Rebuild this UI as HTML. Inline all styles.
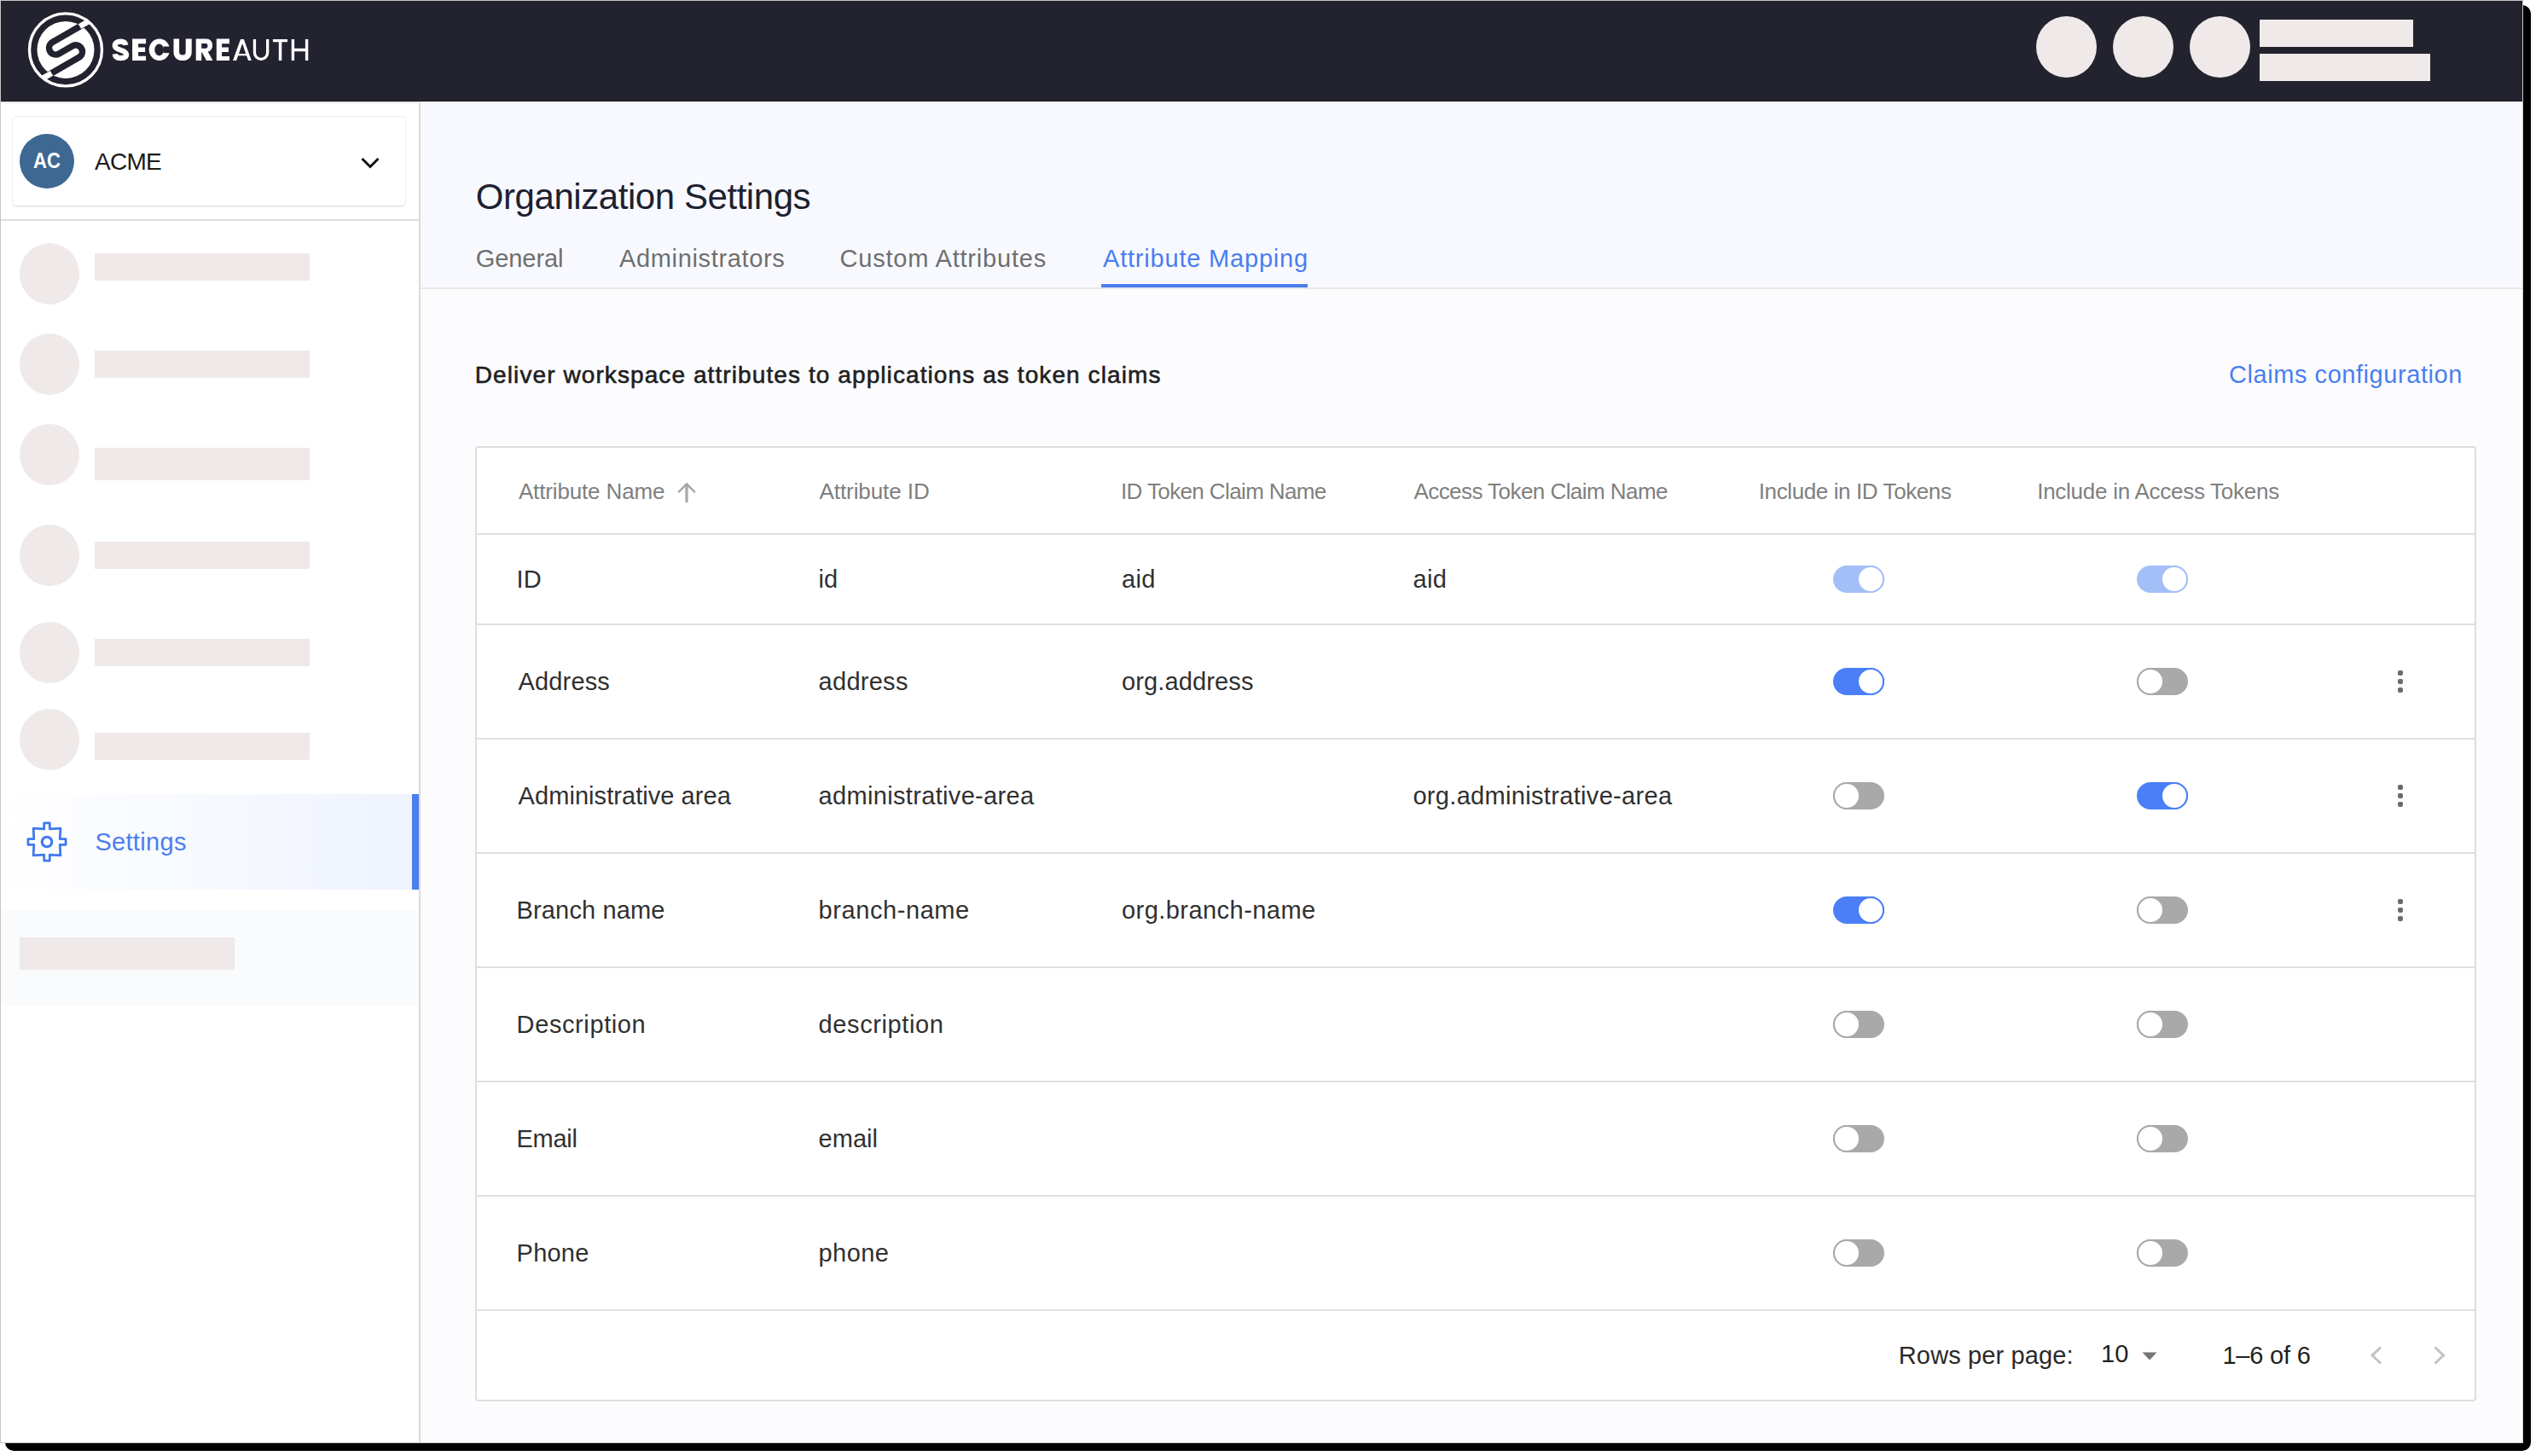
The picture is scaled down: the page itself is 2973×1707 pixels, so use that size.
<!DOCTYPE html>
<html><head><meta charset="utf-8"><style>
html,body{margin:0;padding:0;width:2973px;height:1707px;overflow:hidden;background:#fff;}
body{position:relative;font-family:"Liberation Sans",sans-serif;}
.t{position:absolute;white-space:nowrap;}
#shadow{position:absolute;left:6px;top:6px;width:2961px;height:1695px;background:#000;border-radius:10px;}
#win{position:absolute;left:0;top:0;width:2958px;height:1692px;box-sizing:border-box;border:1px solid #c6c6c6;background:#fcfcfe;overflow:hidden;}
#hdr{position:absolute;left:0;top:0;width:2956px;height:118px;background:#22232f;}
.hc{position:absolute;top:19px;width:71px;height:72px;border-radius:50%;background:#efe9e9;}
.hr{position:absolute;background:#efe9e9;}
#side{position:absolute;left:0;top:118px;width:490px;height:1570px;background:#fff;border-right:2px solid #dadada;border-top:2px solid #e6e6e4;}
.skc{position:absolute;left:23px;width:70px;height:72px;border-radius:50%;background:#efe9e9;}
.skb{position:absolute;left:111px;width:252px;background:#efe9e9;}
.tr{position:absolute;width:60px;height:32px;border-radius:16px;}
.th{position:absolute;width:28px;height:28px;border-radius:50%;background:#fff;border:2px solid;}
.dot{position:absolute;width:6px;height:6px;border-radius:2px;background:#6b6b6b;}
.hl{position:absolute;left:559px;width:2342px;height:2px;background:#dfdfdf;}
</style></head><body>
<div id="shadow"></div>
<div id="win"></div>
<div id="hdr" style="left:1px;top:1px"></div><div style="position:absolute;left:1px;top:118px;width:2956px;height:1px;background:#15151f"></div>
<svg style="position:absolute;left:27px;top:8px" width="100" height="100" viewBox="0 0 100 100">
<defs><clipPath id="disc"><circle cx="50" cy="50.4" r="33.5"/></clipPath></defs>
<circle cx="50" cy="50.4" r="42.5" fill="none" stroke="#fff" stroke-width="3.4"/>
<circle cx="50" cy="50.4" r="33.5" fill="#fff"/>
<g clip-path="url(#disc)"><g transform="translate(50,50.4) rotate(-30)">
  <path d="M 50 -15.5 L -9 -15.5 A 7.75 7.75 0 0 0 -9 0 L 9 0 A 7.75 7.75 0 0 1 9 15.5 L -50 15.5" fill="none" stroke="#22232f" stroke-width="7.5"/>
</g></g>
<g transform="translate(50,50.4) rotate(-30)">
  <line x1="28" y1="-15.5" x2="39.2" y2="-15.5" stroke="#fff" stroke-width="6.5"/>
  <line x1="-28" y1="15.5" x2="-39.2" y2="15.5" stroke="#fff" stroke-width="6.5"/>
</g>
</svg>
<svg style="position:absolute;left:0;top:0" width="400" height="119" viewBox="0 0 400 119">
<g fill="#fff">
<path d="M147.4,52.9 C147,50.3 144.8,48.6 141.3,48.6 C137.4,48.6 134.7,50.6 134.7,53.4 C134.7,56.3 137.4,57.4 141.2,58.6 C145.4,59.9 148.1,61.2 148.1,64.3 C148.1,67.6 145.3,68.1 141.3,68.1 C137.4,68.1 135,66.6 134.8,63.2" fill="none" stroke="#fff" stroke-width="6.2"/>
<path d="M155.1,45.5 H171.1 V51.2 H162.1 V55.5 H170.1 V61.1 H162.1 V65.7 H171.1 V71.1 H155.1 Z"/>
<path fill-rule="evenodd" d="M174.7,58.3 a12.15,12.8 0 1,0 24.3,0 a12.15,12.8 0 1,0 -24.3,0 Z M181.3,58.3 a5.35,6.9 0 1,0 10.7,0 a5.35,6.9 0 1,0 -10.7,0 Z"/>
<rect x="191.5" y="54.5" width="9" height="7.6" fill="#22232f"/>
<path d="M203.5,45.5 L210.1,45.5 L210.1,61 C210.1,63.3 211.6,64.6 214.1,64.6 C216.4,64.6 217.7,63.3 217.7,61 L217.7,45.5 L224.7,45.5 L224.7,61 C224.7,67.3 220.3,71.1 214.1,71.1 C207.9,71.1 203.5,67.3 203.5,61 Z"/>
<path fill-rule="evenodd" d="M229.7,45.5 L241.8,45.5 C246.3,45.5 249.1,48.6 249.1,53.3 C249.1,57 247.2,59.6 243.8,60.8 L249.5,71.1 L242,71.1 L236.9,61.5 L236.2,61.5 L236.2,71.1 L229.7,71.1 Z M236.2,51 L241.3,51 C242.7,51 243.5,52.2 243.5,53.8 C243.5,55.5 242.7,56.7 241.3,56.7 L236.2,56.7 Z"/>
<path d="M253.8,45.5 H269 V51.2 H260.1 V55.6 H268 V61 H260.1 V65.9 H269 V71.1 H253.8 Z"/>
<path fill-rule="evenodd" d="M282,45.9 L285.9,45.9 L294.8,71.1 L291.1,71.1 L289.0,65.2 L279.2,65.2 L277.1,71.1 L273.0,71.1 Z M284.1,51 L288.2,62.9 L280.0,62.9 Z"/>
<path d="M298.45,45.9 L298.45,61.75 A7.6,7.6 0 0 0 313.65,61.75 L313.65,45.9" fill="none" stroke="#fff" stroke-width="3.3"/>
<path d="M319.9,45.9 H337 V49.3 H330.3 V71.1 H326.8 V49.3 H319.9 Z"/>
<path d="M341.7,45.9 H345.1 V56.8 H357.9 V45.9 H361.3 V71.1 H357.9 V60.2 H345.1 V71.1 H341.7 Z"/>
</g></svg>
<div class="hc" style="left:2387px"></div>
<div class="hc" style="left:2477px"></div>
<div class="hc" style="left:2567px"></div>
<div class="hr" style="left:2649px;top:23px;width:180px;height:32px"></div>
<div class="hr" style="left:2649px;top:63px;width:200px;height:32px"></div>
<div id="side" style="left:1px;top:119px"></div>
<div style="position:absolute;left:14px;top:136px;width:460px;height:104px;border:1px solid #eeeeee;border-bottom-color:#e0e0e0;border-radius:5px;background:#fff;box-shadow:0 1px 1px rgba(0,0,0,0.05)"></div>
<div style="position:absolute;left:23px;top:157px;width:64px;height:64px;border-radius:50%;background:#3d6891"></div>
<svg style="position:absolute;left:420px;top:178px" width="28" height="24" viewBox="0 0 28 24">
<path d="M4.5,8 L14,17.5 L23.5,8" fill="none" stroke="#111" stroke-width="3"/>
</svg>
<div style="position:absolute;left:1px;top:257px;width:490px;height:2px;background:#dedede"></div>
<div class=skc style="top:285px"></div><div class=skc style="top:391px"></div><div class=skc style="top:497px"></div><div class=skc style="top:615px"></div><div class=skc style="top:729px"></div><div class=skc style="top:831px"></div><div class=skb style="top:297px;height:32px"></div><div class=skb style="top:411px;height:32px"></div><div class=skb style="top:525px;height:38px"></div><div class=skb style="top:635px;height:32px"></div><div class=skb style="top:749px;height:32px"></div><div class=skb style="top:859px;height:32px"></div>
<div style="position:absolute;left:1px;top:931px;width:482px;height:112px;background:linear-gradient(90deg,#ffffff 0%,#eef3fe 100%)"></div>
<div style="position:absolute;left:483px;top:931px;width:8px;height:112px;background:#4a7ff0"></div>
<svg style="position:absolute;left:31px;top:963px" width="48" height="48" viewBox="-24 -24 48 48">
<path d="M-3.3,-22.1 L3.3,-22.1 L3.3,-15.2 L15.9,-15.9 L15.2,-3.3 L22.1,-3.3 L22.1,3.3 L15.2,3.3 L15.9,15.9 L3.3,15.2 L3.3,22.1 L-3.3,22.1 L-3.3,15.2 L-15.9,15.9 L-15.2,3.3 L-22.1,3.3 L-22.1,-3.3 L-15.2,-3.3 L-15.9,-15.9 L-3.3,-15.2 Z" fill="none" stroke="#4179f0" stroke-width="2.8" stroke-linejoin="round"/>
<circle cx="0" cy="0" r="5.8" fill="none" stroke="#4179f0" stroke-width="3.1"/>
</svg>
<div style="position:absolute;left:1px;top:1067px;width:490px;height:112px;background:#fafbfd"></div>
<div style="position:absolute;left:23px;top:1099px;width:252px;height:38px;background:#efe9e9"></div>
<div style="position:absolute;left:493px;top:119px;width:2464px;height:218px;background:#f8f9fe"></div><div style="position:absolute;left:493px;top:337px;width:2464px;height:2px;background:#e8e8e8"></div>
<div style="position:absolute;left:1291px;top:333px;width:242px;height:4px;background:#4a7ef0"></div>
<div style="position:absolute;left:557px;top:523px;width:2346px;height:1120px;box-sizing:border-box;border:2px solid #dedede;border-radius:4px;background:#fff"></div>
<div class=hl style="top:625px"></div><div class=hl style="top:731px"></div><div class=hl style="top:865px"></div><div class=hl style="top:999px"></div><div class=hl style="top:1133px"></div><div class=hl style="top:1267px"></div><div class=hl style="top:1401px"></div><div class=hl style="top:1535px"></div>
<svg style="position:absolute;left:790px;top:563px" width="30" height="28" viewBox="0 0 30 28">
<path d="M15,26 L15,4.5" stroke="#ababab" stroke-width="3.4" fill="none"/>
<path d="M5.2,14.3 L15,4.5 L24.8,14.3" stroke="#a3a3a3" stroke-width="2.3" fill="none"/>
</svg>
<div class=tr style="left:2149px;top:663.0px;background:#a4bff7"></div><div class=th style="left:2177px;top:663.0px;border-color:#a4bff7"></div><div class=tr style="left:2505px;top:663.0px;background:#a4bff7"></div><div class=th style="left:2533px;top:663.0px;border-color:#a4bff7"></div><div class=tr style="left:2149px;top:783.0px;background:#4a7ff7"></div><div class=th style="left:2177px;top:783.0px;border-color:#4a7ff7"></div><div class=tr style="left:2505px;top:783.0px;background:#a9a9a9"></div><div class=th style="left:2505px;top:783.0px;border-color:#a9a9a9"></div><div class=tr style="left:2149px;top:917.0px;background:#a9a9a9"></div><div class=th style="left:2149px;top:917.0px;border-color:#a9a9a9"></div><div class=tr style="left:2505px;top:917.0px;background:#4a7ff7"></div><div class=th style="left:2533px;top:917.0px;border-color:#4a7ff7"></div><div class=tr style="left:2149px;top:1051.0px;background:#4a7ff7"></div><div class=th style="left:2177px;top:1051.0px;border-color:#4a7ff7"></div><div class=tr style="left:2505px;top:1051.0px;background:#a9a9a9"></div><div class=th style="left:2505px;top:1051.0px;border-color:#a9a9a9"></div><div class=tr style="left:2149px;top:1185.0px;background:#a9a9a9"></div><div class=th style="left:2149px;top:1185.0px;border-color:#a9a9a9"></div><div class=tr style="left:2505px;top:1185.0px;background:#a9a9a9"></div><div class=th style="left:2505px;top:1185.0px;border-color:#a9a9a9"></div><div class=tr style="left:2149px;top:1319.0px;background:#a9a9a9"></div><div class=th style="left:2149px;top:1319.0px;border-color:#a9a9a9"></div><div class=tr style="left:2505px;top:1319.0px;background:#a9a9a9"></div><div class=th style="left:2505px;top:1319.0px;border-color:#a9a9a9"></div><div class=tr style="left:2149px;top:1453.0px;background:#a9a9a9"></div><div class=th style="left:2149px;top:1453.0px;border-color:#a9a9a9"></div><div class=tr style="left:2505px;top:1453.0px;background:#a9a9a9"></div><div class=th style="left:2505px;top:1453.0px;border-color:#a9a9a9"></div>
<div class=dot style="left:2811px;top:786.0px"></div><div class=dot style="left:2811px;top:796.0px"></div><div class=dot style="left:2811px;top:806.0px"></div><div class=dot style="left:2811px;top:920.0px"></div><div class=dot style="left:2811px;top:930.0px"></div><div class=dot style="left:2811px;top:940.0px"></div><div class=dot style="left:2811px;top:1054.0px"></div><div class=dot style="left:2811px;top:1064.0px"></div><div class=dot style="left:2811px;top:1074.0px"></div>
<svg style="position:absolute;left:2510px;top:1584px" width="20" height="12" viewBox="0 0 20 12">
<path d="M1.5,1.5 L18.5,1.5 L10,10.5 Z" fill="#757575"/>
</svg>
<svg style="position:absolute;left:2774px;top:1574px" width="100" height="30" viewBox="0 0 100 30">
<path d="M17,5.5 L7,15 L17,24.5" stroke="#c2c2c2" stroke-width="3" fill="none"/>
<path d="M80.5,5.5 L90.5,15 L80.5,24.5" stroke="#c2c2c2" stroke-width="3" fill="none"/>
</svg>
<div class=t style="left:38.90px;top:175.00px;font-size:26px;line-height:26px;font-weight:700;color:#fff;letter-spacing:0.000px;transform:scaleX(0.8497);transform-origin:0 0;">AC</div><div class=t style="left:111.10px;top:175.70px;font-size:28px;line-height:28px;font-weight:400;color:#1a1a1a;letter-spacing:-0.774px;">ACME</div><div class=t style="left:111.40px;top:972.80px;font-size:29px;line-height:29px;font-weight:400;color:#4a7ef0;letter-spacing:0.316px;">Settings</div><div class=t style="left:557.80px;top:210.00px;font-size:42px;line-height:42px;font-weight:400;color:#1d2130;letter-spacing:-0.438px;">Organization Settings</div><div class=t style="left:557.80px;top:288.80px;font-size:29px;line-height:29px;font-weight:400;color:#6f6f6f;letter-spacing:-0.088px;">General</div><div class=t style="left:726.00px;top:288.80px;font-size:29px;line-height:29px;font-weight:400;color:#6f6f6f;letter-spacing:0.652px;">Administrators</div><div class=t style="left:984.50px;top:288.80px;font-size:29px;line-height:29px;font-weight:400;color:#6f6f6f;letter-spacing:0.802px;">Custom Attributes</div><div class=t style="left:1293.00px;top:288.80px;font-size:29px;line-height:29px;font-weight:400;color:#4a7ef0;letter-spacing:0.802px;">Attribute Mapping</div><div class=t style="left:556.80px;top:426.00px;font-size:28px;line-height:28px;font-weight:400;color:#1f1f1f;letter-spacing:1.091px;-webkit-text-stroke:0.6px #1f1f1f;">Deliver workspace attributes to applications as token claims</div><div class=t style="left:2613.00px;top:425.00px;font-size:29px;line-height:29px;font-weight:400;color:#4a7ef0;letter-spacing:0.558px;">Claims configuration</div><div class=t style="left:607.90px;top:563.20px;font-size:26px;line-height:26px;font-weight:400;color:#7f7f7f;letter-spacing:-0.142px;">Attribute Name</div><div class=t style="left:960.60px;top:563.20px;font-size:26px;line-height:26px;font-weight:400;color:#7f7f7f;letter-spacing:-0.089px;">Attribute ID</div><div class=t style="left:1314.00px;top:563.20px;font-size:26px;line-height:26px;font-weight:400;color:#7f7f7f;letter-spacing:-0.616px;">ID Token Claim Name</div><div class=t style="left:1657.40px;top:563.20px;font-size:26px;line-height:26px;font-weight:400;color:#7f7f7f;letter-spacing:-0.550px;">Access Token Claim Name</div><div class=t style="left:2061.80px;top:563.20px;font-size:26px;line-height:26px;font-weight:400;color:#7f7f7f;letter-spacing:-0.396px;">Include in ID Tokens</div><div class=t style="left:2388.20px;top:563.20px;font-size:26px;line-height:26px;font-weight:400;color:#7f7f7f;letter-spacing:-0.262px;">Include in Access Tokens</div><div class=t style="left:605.60px;top:665.00px;font-size:29px;line-height:29px;font-weight:400;color:#303030;letter-spacing:0.000px;">ID</div><div class=t style="left:959.60px;top:665.00px;font-size:29px;line-height:29px;font-weight:400;color:#303030;letter-spacing:0.000px;">id</div><div class=t style="left:1315.00px;top:665.00px;font-size:29px;line-height:29px;font-weight:400;color:#303030;letter-spacing:0.364px;">aid</div><div class=t style="left:1656.40px;top:665.00px;font-size:29px;line-height:29px;font-weight:400;color:#303030;letter-spacing:0.364px;">aid</div><div class=t style="left:607.60px;top:785.00px;font-size:29px;line-height:29px;font-weight:400;color:#303030;letter-spacing:0.136px;">Address</div><div class=t style="left:959.60px;top:785.00px;font-size:29px;line-height:29px;font-weight:400;color:#303030;letter-spacing:0.272px;">address</div><div class=t style="left:1315.00px;top:785.00px;font-size:29px;line-height:29px;font-weight:400;color:#303030;letter-spacing:0.136px;">org.address</div><div class=t style="left:607.60px;top:919.00px;font-size:29px;line-height:29px;font-weight:400;color:#303030;letter-spacing:0.056px;">Administrative area</div><div class=t style="left:959.60px;top:919.00px;font-size:29px;line-height:29px;font-weight:400;color:#303030;letter-spacing:0.329px;">administrative-area</div><div class=t style="left:1656.40px;top:919.00px;font-size:29px;line-height:29px;font-weight:400;color:#303030;letter-spacing:0.325px;">org.administrative-area</div><div class=t style="left:605.60px;top:1053.00px;font-size:29px;line-height:29px;font-weight:400;color:#303030;letter-spacing:0.134px;">Branch name</div><div class=t style="left:959.60px;top:1053.00px;font-size:29px;line-height:29px;font-weight:400;color:#303030;letter-spacing:0.576px;">branch-name</div><div class=t style="left:1315.00px;top:1053.00px;font-size:29px;line-height:29px;font-weight:400;color:#303030;letter-spacing:0.449px;">org.branch-name</div><div class=t style="left:605.60px;top:1187.00px;font-size:29px;line-height:29px;font-weight:400;color:#303030;letter-spacing:0.607px;">Description</div><div class=t style="left:959.60px;top:1187.00px;font-size:29px;line-height:29px;font-weight:400;color:#303030;letter-spacing:0.599px;">description</div><div class=t style="left:605.60px;top:1321.00px;font-size:29px;line-height:29px;font-weight:400;color:#303030;letter-spacing:-0.318px;">Email</div><div class=t style="left:959.60px;top:1321.00px;font-size:29px;line-height:29px;font-weight:400;color:#303030;letter-spacing:0.011px;">email</div><div class=t style="left:605.60px;top:1455.00px;font-size:29px;line-height:29px;font-weight:400;color:#303030;letter-spacing:0.218px;">Phone</div><div class=t style="left:959.60px;top:1455.00px;font-size:29px;line-height:29px;font-weight:400;color:#303030;letter-spacing:0.397px;">phone</div><div class=t style="left:2225.80px;top:1575.00px;font-size:29px;line-height:29px;font-weight:400;color:#2a2a2a;letter-spacing:0.134px;">Rows per page:</div><div class=t style="left:2463.10px;top:1572.70px;font-size:29px;line-height:29px;font-weight:400;color:#222;letter-spacing:0.000px;">10</div><div class=t style="left:2605.40px;top:1575.00px;font-size:29px;line-height:29px;font-weight:400;color:#222;letter-spacing:-0.198px;">1–6 of 6</div>
</body></html>
